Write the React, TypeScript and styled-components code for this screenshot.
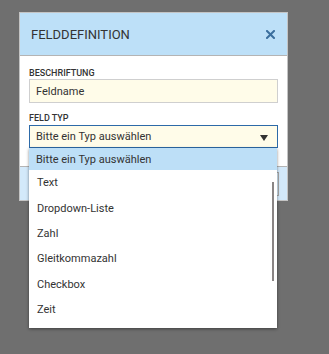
import React from "react";
import styled, { createGlobalStyle } from "styled-components";

const Global = createGlobalStyle`
  html, body { margin: 0; padding: 0; }
  body {
    background: #6f6f6f;
    font-family: Roboto, "Liberation Sans", Arial, sans-serif;
    color: #333;
    width: 329px;
    height: 354px;
    overflow: hidden;
  }
`;

const Page = styled.div`
  padding: 12px 0 0 19px;
`;

const Dialog = styled.div`
  width: 269px;
  box-sizing: border-box;
  border: 1px solid #c4c4c4;
  background: #fff;
`;

const Header = styled.div`
  height: 42px;
  display: flex;
  align-items: center;
  justify-content: space-between;
  padding: 0 12px 0 11px;
  background: #bde0f8;
  border-bottom: 1px solid #b4b4b4;
`;

const Title = styled.div`
  font-size: 13px;
  color: #333;
  letter-spacing: 0;
`;

const Close = styled.button`
  border: 0;
  background: transparent;
  padding: 0;
  width: 9px;
  height: 9px;
  display: flex;
  margin-top: 0px;
`;

const Body = styled.div`
  padding: 11px 9px 18px 9px;
  display: flex;
  flex-direction: column;
`;

const Label = styled.div<{ $gap?: number }>`
  font-size: 9px;
  font-weight: 500;
  line-height: 12px;
  color: #333;
  text-transform: uppercase;
  margin-top: ${(p) => p.$gap ?? 0}px;
  margin-bottom: ${(p) => (p.$gap ? 1 : 0)}px;
`;

const Input = styled.div`
  height: 24px;
  box-sizing: border-box;
  border: 1px solid #cfcfcf;
  background: #fffce9;
  font-size: 11px;
  display: flex;
  align-items: center;
  padding-left: 6px;
  color: #333;
`;

const SelectWrap = styled.div`
  position: relative;
`;

const Select = styled.div`
  height: 23px;
  box-sizing: border-box;
  border: 1px solid #2d6aa8;
  background: #fffce9;
  font-size: 11px;
  display: flex;
  align-items: center;
  justify-content: space-between;
  padding: 0 9px 0 6px;
  color: #333;
`;

const Arrow = styled.span`
  width: 0;
  height: 0;
  border-left: 4px solid transparent;
  border-right: 4px solid transparent;
  border-top: 6px solid #333;
  margin-top: 2px;
`;

const List = styled.div`
  position: absolute;
  left: 0;
  top: 23px;
  width: 248px;
  height: 180px;
  background: #fff;
  box-shadow: 0 1px 3px rgba(0, 0, 0, 0.45);
  z-index: 5;
  overflow: hidden;
`;

const Item = styled.div<{ $active?: boolean }>`
  height: ${(p) => (p.$active ? 22 : 25.4)}px;
  display: flex;
  align-items: center;
  padding-left: ${(p) => (p.$active ? 7 : 8)}px;
  font-size: 11px;
  color: #333;
  background: ${(p) => (p.$active ? "#bddff7" : "#fff")};
`;

const Scrollbar = styled.div`
  position: absolute;
  right: 3px;
  top: 34px;
  width: 2px;
  height: 99px;
  background: #8a8585;
`;

const Footer = styled.div`
  height: 33px;
  border-top: 1px solid #b4b4b4;
  background: #d3e9fa;
  display: flex;
  align-items: center;
  justify-content: flex-end;
  padding-right: 8px;
`;

const FooterButton = styled.button`
  height: 24px;
  width: 60px;
  border: 1px solid #a8a8a8;
  background: #d8ecfb;
  font-family: inherit;
  font-size: 11px;
  color: #333;
`;

const options = [
  "Bitte ein Typ auswählen",
  "Text",
  "Dropdown-Liste",
  "Zahl",
  "Gleitkommazahl",
  "Checkbox",
  "Zeit",
];

export default function App() {
  return (
    <>
      <Global />
      <Page>
        <Dialog>
          <Header>
            <Title>FELDDEFINITION</Title>
            <Close aria-label="Schließen">
              <svg width="9" height="9" viewBox="0 0 9 9">
                <path d="M1 1 L8 8 M8 1 L1 8" stroke="#3b6f9e" strokeWidth="2" strokeLinecap="square" />
              </svg>
            </Close>
          </Header>
          <Body>
            <Label>Beschriftung</Label>
            <Input>Feldname</Input>
            <Label $gap={9}>Feld Typ</Label>
            <SelectWrap>
              <Select>
                <span>Bitte ein Typ auswählen</span>
                <Arrow />
              </Select>
              <List>
                {options.map((o, i) => (
                  <Item key={o} $active={i === 0}>
                    {o}
                  </Item>
                ))}
                <Scrollbar />
              </List>
            </SelectWrap>
          </Body>
          <Footer>
            <FooterButton>OK</FooterButton>
          </Footer>
        </Dialog>
      </Page>
    </>
  );
}
